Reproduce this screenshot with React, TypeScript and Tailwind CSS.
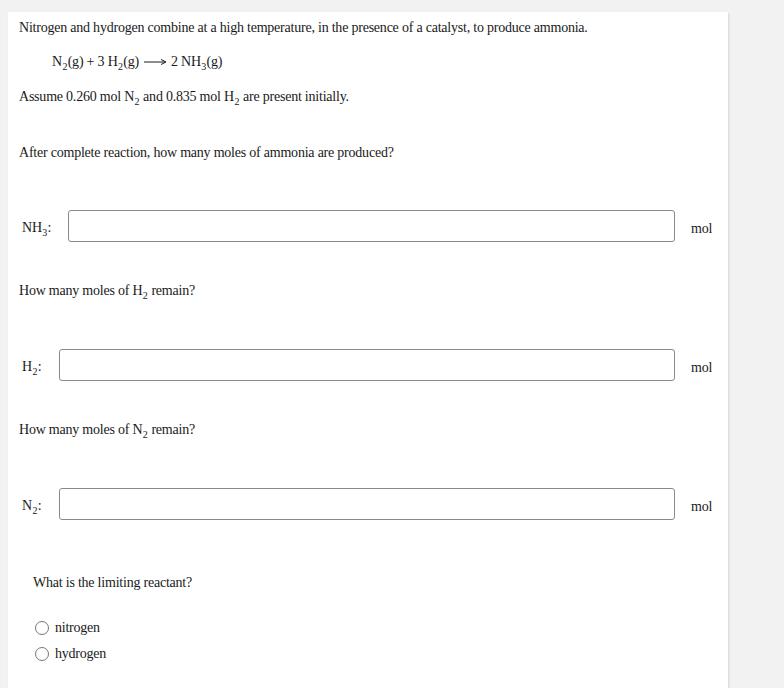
import React from "react";

const Sub = ({ children }: { children: React.ReactNode }) => (
  <span className="relative top-[4px] text-[10px] leading-[0] mx-[0.5px]">{children}</span>
);

const Row = ({ label, labelW }: { label: React.ReactNode; labelW: string }) => (
  <div className="flex items-center h-[32px] pl-[3px]">
    <div className={`${labelW} shrink-0 pt-[3px]`}>{label}</div>
    <div className="flex-1 h-[32px] rounded-[3px] border border-[#8a8a8a] bg-white" />
    <div className="w-[53px] shrink-0 pl-[16px] pt-[5px]">mol</div>
  </div>
);

const Radio = ({ label }: { label: string }) => (
  <div className="flex items-center h-[16px] pl-[16px]">
    <span className="w-[14px] h-[14px] rounded-full border border-[#767676] bg-white shrink-0" />
    <span className="ml-[6px]">{label}</span>
  </div>
);

export default function App() {
  return (
    <div
      className="min-h-[688px] bg-[#f2f2f2] pt-[12px] pl-[8px] text-[14px] leading-[16px] tracking-[-0.22px] text-[#1a1a1a]"
      style={{ fontFamily: '"Liberation Serif", "Times New Roman", serif' }}
    >
      <div className="w-[720px] min-h-[676px] bg-white pl-[11px] pt-[8px] shadow-[1px_1px_2px_rgba(0,0,0,0.12)]">
        <p className="h-[16px]">
          Nitrogen and hydrogen combine at a high temperature, in the presence of a catalyst, to produce ammonia.
        </p>
        <p className="h-[16px] mt-[18px] pl-[33px] flex items-center">
          <span>
            N<Sub>2</Sub>(g) + 3 H<Sub>2</Sub>(g)
          </span>
          <svg width="24" height="10" viewBox="0 0 24 10" className="mx-[4px]">
            <line x1="1" y1="5" x2="22" y2="5" stroke="#1a1a1a" strokeWidth="1" />
            <path d="M18 2.5 L23 5 L18 7.5" fill="none" stroke="#1a1a1a" strokeWidth="1" />
          </svg>
          <span>
            2 NH<Sub>3</Sub>(g)
          </span>
        </p>
        <p className="h-[16px] mt-[19px]">
          Assume 0.260 mol N<Sub>2</Sub> and 0.835 mol H<Sub>2</Sub> are present initially.
        </p>
        <p className="h-[16px] mt-[40px]">After complete reaction, how many moles of ammonia are produced?</p>
        <div className="mt-[49px]">
          <Row
            labelW="w-[46px]"
            label={
              <span>
                NH<Sub>3</Sub>:
              </span>
            }
          />
        </div>
        <p className="h-[16px] mt-[41px]">
          How many moles of H<Sub>2</Sub> remain?
        </p>
        <div className="mt-[50px]">
          <Row
            labelW="w-[37px]"
            label={
              <span>
                H<Sub>2</Sub>:
              </span>
            }
          />
        </div>
        <p className="h-[16px] mt-[41px]">
          How many moles of N<Sub>2</Sub> remain?
        </p>
        <div className="mt-[50px]">
          <Row
            labelW="w-[37px]"
            label={
              <span>
                N<Sub>2</Sub>:
              </span>
            }
          />
        </div>
        <p className="h-[16px] mt-[55px] pl-[14px]">What is the limiting reactant?</p>
        <div className="mt-[29px] flex flex-col gap-[10px]">
          <Radio label="nitrogen" />
          <Radio label="hydrogen" />
        </div>
      </div>
    </div>
  );
}
